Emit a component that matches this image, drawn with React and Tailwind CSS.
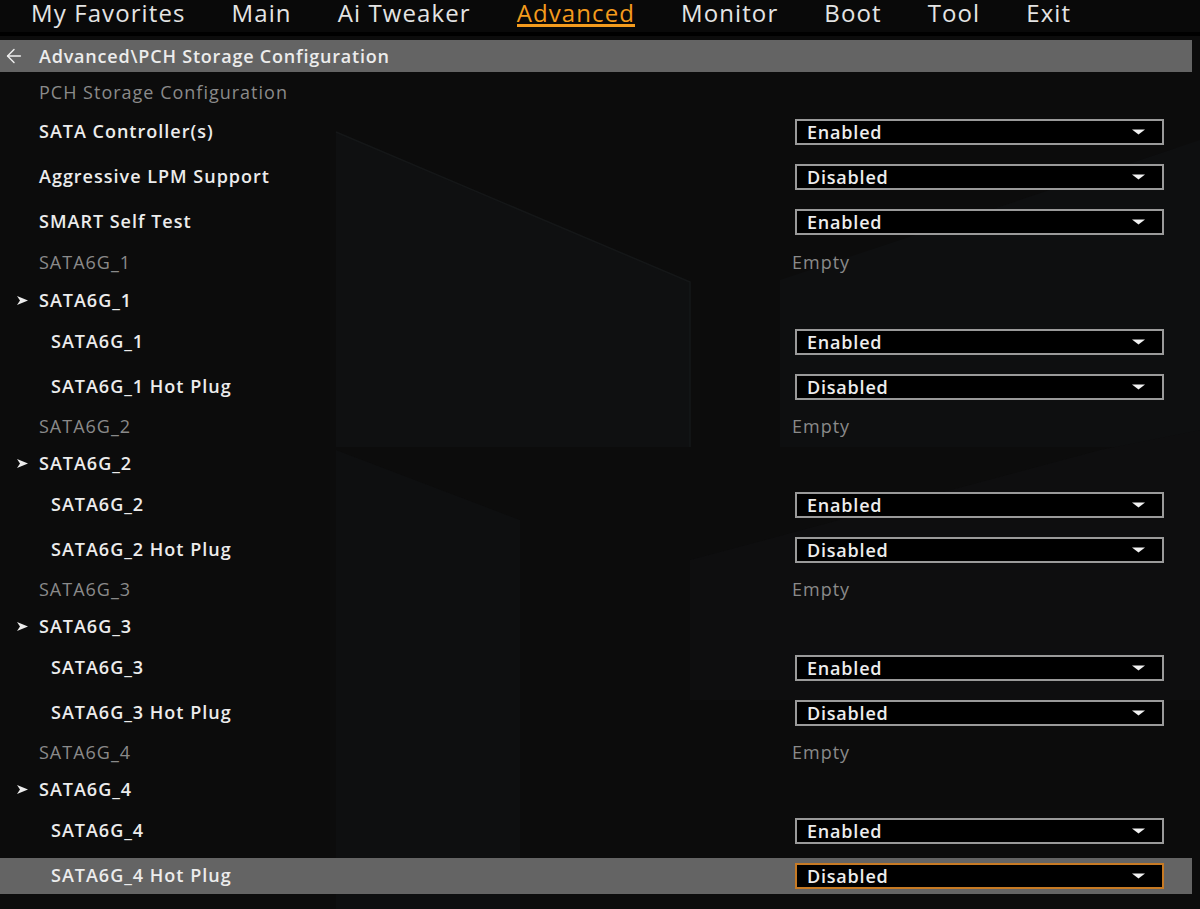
import { ArrowLeft } from 'lucide-react'

const tabs = ['My Favorites', 'Main', 'Ai Tweaker', 'Advanced', 'Monitor', 'Boot', 'Tool', 'Exit']

const rows = [
  { type: 'drop', label: 'SATA Controller(s)', value: 'Enabled' },
  { type: 'drop', label: 'Aggressive LPM Support', value: 'Disabled' },
  { type: 'drop', label: 'SMART Self Test', value: 'Enabled' },
]

const ports = [1, 2, 3, 4]
ports.forEach((n) => {
  rows.push({ type: 'info', label: `SATA6G_${n}`, value: 'Empty', first: n === 1 })
  rows.push({ type: 'arrow', label: `SATA6G_${n}` })
  rows.push({ type: 'drop', label: `SATA6G_${n}`, value: 'Enabled', sub: true })
  rows.push({ type: 'drop', label: `SATA6G_${n} Hot Plug`, value: 'Disabled', sub: true, selected: n === 4 })
})

const Caret = () => (
  <svg width="13" height="6" viewBox="0 0 13 6" className="shrink-0">
    <polygon points="0,0.5 13,0.5 6.5,5.5" fill="#f2f2f2" />
  </svg>
)

const Pointer = () => (
  <svg width="11" height="9" viewBox="0 0 11 9" className="shrink-0">
    <polygon points="0,0 11,4.5 0,9 3,4.5" fill="#ececec" />
  </svg>
)

const Dropdown = ({ value, selected }) => (
  <div
    className={`w-[369px] h-[26px] flex items-center justify-between pl-[10px] pr-[17px] bg-black border-2 ${
      selected ? 'border-[#c77a24]' : 'border-[#9a9a9a]'
    }`}
  >
    <span className="text-[18px] leading-[22px] font-semibold text-[#ededed] tracking-[0.8px]">{value}</span>
    <Caret />
  </div>
)

const Row = ({ row }) => {
  if (row.type === 'info') {
    return (
      <div
        className={`${row.first ? 'h-[37px]' : 'h-[35px]'} flex items-center text-[18px] text-[#8a8a8a] tracking-[1px]`}
      >
        <span className="pl-[39px] w-[792px]">{row.label}</span>
        <span>{row.value}</span>
      </div>
    )
  }
  if (row.type === 'arrow') {
    return (
      <div className="h-[38px] flex items-center text-[18px] font-semibold text-[#ececec] tracking-[1px]">
        <span className="w-[39px] pl-[17px] flex items-center">
          <Pointer />
        </span>
        <span>{row.label}</span>
      </div>
    )
  }
  return (
    <div className="h-[45px] flex items-center">
      <div
        className={`h-[36px] w-[1192px] flex items-center ${row.selected ? 'bg-[#646464]' : ''}`}
      >
        <span
          className={`${row.sub ? 'pl-[51px]' : 'pl-[39px]'} w-[795px] text-[18px] font-semibold text-[#ececec] tracking-[1px]`}
        >
          {row.label}
        </span>
        <Dropdown value={row.value} selected={row.selected} />
      </div>
    </div>
  )
}

export default function App() {
  return (
    <div
      className="relative w-[1200px] h-[909px] overflow-hidden bg-[#0c0c0c]"
      style={{ fontFamily: '"Open Sans", "Noto Sans", sans-serif' }}
    >
      {/* faint background shapes */}
      <svg className="absolute inset-0 pointer-events-none" width="1200" height="909">
        <polygon points="336,132 690,282 690,447 336,447" fill="#0f1011" />
        <polygon points="336,450 520,520 520,909 336,909" fill="#0e0f10" />
        <polygon points="780,280 1200,140 1200,447 780,447" fill="#0e0f10" />
        <polygon points="690,560 1100,450 1200,430 1200,700 690,700" fill="#0e0e0f" />
        <polyline points="336,132 690,282 690,447" fill="none" stroke="#151718" strokeWidth="1.5" />
      </svg>

      <div className="relative">
        {/* tabs */}
        <div className="h-[36px] bg-[#090909] flex items-start pl-[31px] gap-[46px] border-b-4 border-black">
          {tabs.map((t) => (
            <span
              key={t}
              className={`text-[24px] leading-[23px] pt-[1px] tracking-[1.1px] ${
                t === 'Advanced'
                  ? 'text-[#f49b1d] border-b-[3px] border-[#f49b1d]'
                  : 'text-[#e4e4e4]'
              }`}
            >
              {t}
            </span>
          ))}
        </div>

        {/* breadcrumb */}
        <div className="mt-[4px] h-[32px] w-[1192px] bg-[#646464] flex items-center">
          <span className="w-[39px] pl-[3px] flex items-center text-[#eeeeee]">
            <ArrowLeft size={22} strokeWidth={1.6} />
          </span>
          <span className="text-[18px] font-semibold text-[#ececec] tracking-[0.8px]">
            Advanced\PCH Storage Configuration
          </span>
        </div>

        {/* list */}
        <div className="pt-[3px]">
          <div className="h-[34px] flex items-center pl-[39px] text-[18px] text-[#8a8a8a] tracking-[1px]">
            PCH Storage Configuration
          </div>
          {rows.map((r, i) => (
            <Row key={i} row={r} />
          ))}
        </div>
      </div>
    </div>
  )
}
